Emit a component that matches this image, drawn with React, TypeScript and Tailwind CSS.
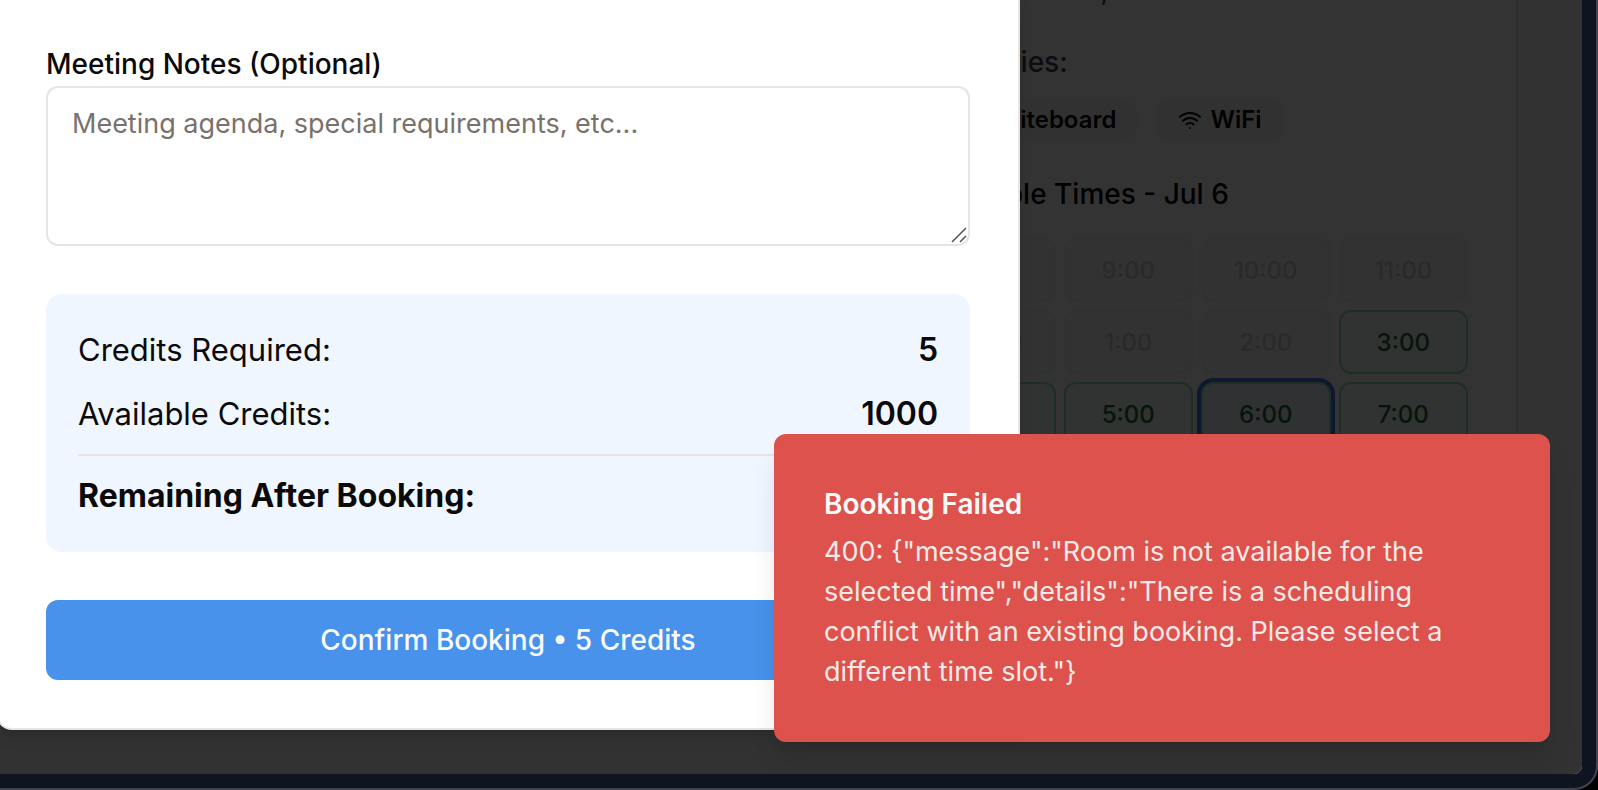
import React from "react";
import { Presentation, Wifi } from "lucide-react";

type Slot = { time: string; state: "taken" | "open" | "selected" };

const slots: Slot[] = [
  { time: "8:00", state: "taken" },
  { time: "9:00", state: "taken" },
  { time: "10:00", state: "taken" },
  { time: "11:00", state: "taken" },
  { time: "12:00", state: "taken" },
  { time: "1:00", state: "taken" },
  { time: "2:00", state: "taken" },
  { time: "3:00", state: "open" },
  { time: "4:00", state: "open" },
  { time: "5:00", state: "open" },
  { time: "6:00", state: "selected" },
  { time: "7:00", state: "open" },
];

const slotStyles: Record<Slot["state"], string> = {
  taken: "border-gray-200 bg-gray-100 text-gray-400 opacity-50",
  open: "border-[#8ee8b0] bg-green-50 text-[#1f6b3a]",
  selected: "border-[#8ee8b0] bg-blue-50 text-[#1f6b3a] ring-4 ring-[#4a78f0]",
};

function Amenity({ icon, label }: { icon: React.ReactNode; label: string }) {
  return (
    <li className="flex items-center gap-2 rounded-full border-2 border-transparent bg-stone-100 px-[21px] text-2xl leading-10 font-semibold text-stone-950">
      {icon}
      {label}
    </li>
  );
}

function RoomCard() {
  return (
    <section className="-mt-[30px] w-[642px] shrink-0 self-start rounded-b-2xl border-x-2 border-b-2 border-stone-200 bg-white px-12 pb-12 text-[28px] leading-10">
      <p className="text-[#3f4250]">Metro Centre, 200</p>
      <h3 className="mt-8 font-medium text-[#3f4250]">Amenities:</h3>
      <ul className="mt-4 flex gap-4">
        <Amenity icon={<Presentation size={24} />} label="Whiteboard" />
        <Amenity icon={<Wifi size={24} />} label="WiFi" />
      </ul>
      <h3 className="mt-8 font-medium text-black">Available Times - Jul 6</h3>
      <div className="mt-6 grid grid-cols-4 gap-2">
        {slots.map((slot) => (
          <button
            key={slot.time}
            type="button"
            disabled={slot.state === "taken"}
            className={`h-16 rounded-xl border-2 pt-0.5 text-2xl font-medium ${slotStyles[slot.state]}`}
          >
            {slot.time}
          </button>
        ))}
      </div>
    </section>
  );
}

function CreditRow({ label, value }: { label: string; value: string }) {
  return (
    <div className="flex justify-between">
      <dt className="text-[31px]">{label}</dt>
      <dd className="font-semibold">{value}</dd>
    </div>
  );
}

function BookingDialog() {
  return (
    <form
      role="dialog"
      aria-label="Book room"
      className="absolute -top-4 -left-1 flex w-full max-w-5xl flex-col gap-12 rounded-2xl border-2 border-neutral-200 bg-white px-12 pt-16 pb-12 text-stone-950 shadow-lg"
    >
      <div className="flex flex-col gap-2">
        <label htmlFor="notes" className="text-[28px] leading-none font-medium">
          Meeting Notes (Optional)
        </label>
        <div className="relative flex">
          <textarea
            id="notes"
            placeholder="Meeting agenda, special requirements, etc..."
            className="h-40 w-full resize-none rounded-xl border-2 border-neutral-200 bg-white px-6 py-4 text-[27px] leading-10 placeholder:text-stone-500"
          />
          <svg
            viewBox="0 0 16 16"
            className="pointer-events-none absolute right-[3px] bottom-[3px] h-4 w-4 stroke-neutral-600"
            strokeWidth="1.5"
            aria-hidden="true"
          >
            <path d="M1 15 15 1M9 15l6-6" />
          </svg>
        </div>
      </div>

      <dl className="flex flex-col gap-4 rounded-2xl bg-[#eff6ff] p-8 text-[32px] leading-[48px]">
        <CreditRow label="Credits Required:" value="5" />
        <CreditRow label="Available Credits:" value="1000" />
        <div className="flex justify-between border-t-2 border-stone-200 pt-4 font-bold">
          <dt>Remaining After Booking:</dt>
          <dd>995</dd>
        </div>
      </dl>

      <button
        type="submit"
        className="h-20 rounded-xl bg-[#4892eb] text-[28px] font-medium text-[#f8fbff]"
      >
        Confirm Booking • 5 Credits
      </button>
    </form>
  );
}

function Toast() {
  return (
    <div
      role="alert"
      className="absolute right-8 bottom-8 flex w-[776px] flex-col gap-2 rounded-xl border-2 border-[#dd524c] bg-[#dd524c] py-12 pr-20 pl-12 text-[28px] leading-10 text-stone-50 shadow-[0_20px_30px_-6px_rgb(0_0_0/0.12),0_8px_12px_-8px_rgb(0_0_0/0.12)]"
    >
      <p className="font-semibold">Booking Failed</p>
      <p className="text-[27px] opacity-90">
        {
          '400: {"message":"Room is not available for the selected time","details":"There is a scheduling conflict with an existing booking. Please select a different time slot."}'
        }
      </p>
    </div>
  );
}

export default function App() {
  return (
    <div className="flex h-screen bg-black font-['Inter',sans-serif]">
      <div className="flex flex-1 rounded-br-3xl border-r-2 border-b-2 border-[#43434f] bg-[#0e1420] pr-3.5 pb-3.5">
        <main className="relative flex flex-1 justify-end overflow-hidden rounded-br-lg bg-stone-50 pr-16">
          <RoomCard />
          <div className="absolute inset-0 bg-black/80" />
          <BookingDialog />
          <Toast />
        </main>
      </div>
    </div>
  );
}
